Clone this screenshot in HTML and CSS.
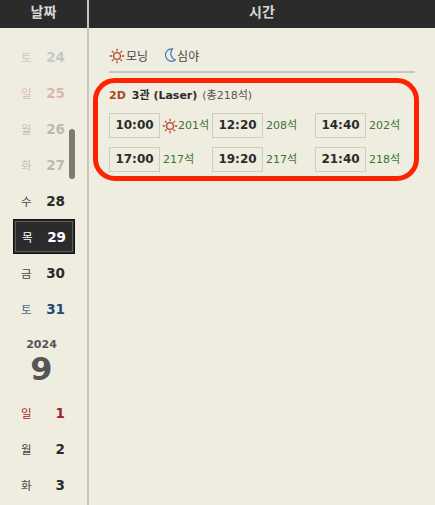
FILE: index.html
```html
<!DOCTYPE html>
<html lang="ko">
<head>
<meta charset="utf-8">
<title>시간표</title>
<link rel="stylesheet" href="styles.css">
</head>
<body>
<div class="app">
  <aside class="dates">
    <div class="head">날짜</div>
    <div class="list">
      <div class="day past sat"><span class="dow">토</span><b class="num">24</b></div>
      <div class="day past sun"><span class="dow">일</span><b class="num">25</b></div>
      <div class="day past"><span class="dow">월</span><b class="num">26</b></div>
      <div class="day past"><span class="dow">화</span><b class="num">27</b></div>
      <div class="day"><span class="dow">수</span><b class="num">28</b></div>
      <div class="day selected"><span class="dow">목</span><b class="num">29</b></div>
      <div class="day"><span class="dow">금</span><b class="num">30</b></div>
      <div class="day sat"><span class="dow">토</span><b class="num">31</b></div>
      <div class="month"><span class="year">2024</span><span class="mon">9</span></div>
      <div class="day sun"><span class="dow">일</span><b class="num">1</b></div>
      <div class="day"><span class="dow">월</span><b class="num">2</b></div>
      <div class="day"><span class="dow">화</span><b class="num">3</b></div>
    </div>
    <div class="scrollbar"></div>
  </aside>
  <main class="times">
    <div class="head">시간</div>
    <div class="legend">
      <span class="legend-item">
        <svg class="icon" viewBox="0 0 16 16"><use href="#sun"/></svg>모닝
      </span>
      <span class="legend-item">
        <svg class="icon-moon" viewBox="0 0 11 15"><path d="M7.500 .9A6.200 6.200 0 1 0 10.400 12 7 7 0 0 1 7.500 .9Z"/></svg>심야
      </span>
    </div>
    <section class="hall">
      <h2 class="hall-title"><b class="fmt">2D</b><b class="name">3관 (Laser)</b><span class="total">(총218석)</span></h2>
      <div class="grid">
        <div class="slot"><span class="time">10:00</span><span class="seats"><svg class="icon small" viewBox="0 0 16 16"><use href="#sun"/></svg>201석</span></div>
        <div class="slot"><span class="time">12:20</span><span class="seats">208석</span></div>
        <div class="slot"><span class="time">14:40</span><span class="seats">202석</span></div>
        <div class="slot"><span class="time">17:00</span><span class="seats">217석</span></div>
        <div class="slot"><span class="time">19:20</span><span class="seats">217석</span></div>
        <div class="slot"><span class="time">21:40</span><span class="seats">218석</span></div>
      </div>
    </section>
    <div class="highlight"></div>
  </main>
</div>
<svg class="defs" width="0" height="0">
  <symbol id="sun" viewBox="0 0 16 16">
    <g fill="none" stroke="#b8452c" stroke-width="1.3">
      <circle cx="8" cy="8" r="3.4"/>
      <path d="M8 .8v2.400M8 12.800v2.400M.8 8h2.400M12.800 8h2.400M2.900 2.900l1.700 1.700M11.400 11.400l1.700 1.700M2.900 13.100l1.700-1.700M11.400 4.600l1.700-1.700"/>
    </g>
  </symbol>
</svg>
</body>
</html>
```
FILE: styles.css
```css
* { box-sizing: border-box; }
html, body { margin: 0; height: 100%; }
body {
  background: #efede0;
  font-family: "DejaVu Sans", "Noto Sans CJK KR", sans-serif;
  color: #2b2b2b;
  overflow: hidden;
}
.app { display: flex; height: 505px; }
.dates {
  position: relative;
  width: 89px;
  flex: none;
  border-right: 2px solid #c9c7b9;
}
.head {
  height: 28px;
  background: #2b2b2b;
  color: #d8d8d8;
  font-size: 14px;
  font-weight: bold;
  line-height: 25px;
  text-align: center;
}
.list { padding-top: 11px; }
.day {
  display: flex;
  align-items: center;
  justify-content: space-between;
  height: 36px;
  margin: 0 12px 0 13px;
  padding: 0 10px 0 8px;
}
.dow { font-size: 11.5px; color: #444; }
.num { font-size: 13.5px; }
.past { opacity: .26; }
.sat .dow, .sat .num { color: #234a7a; }
.sat .dow { color: #4a6c92; }
.sun .dow, .sun .num { color: #a51e22; }
.past.sat .dow, .past.sat .num { color: #45607a; }
.day.selected {
  height: 35px;
  margin-bottom: 1px;
  background: #2b2b2b;
  border: 1px solid #111;
  outline: 1px solid #5a5a5a;
  outline-offset: -3px;
  padding-right: 8px;
  padding-left: 8px;
}
.selected .dow, .selected .num { color: #fff; }
.month {
  display: flex;
  flex-direction: column;
  align-items: center;
  height: 68px;
  padding: 11px 4px 0 0;
  color: #555;
  font-weight: bold;
}
.year { font-size: 11px; line-height: 13px; }
.mon { font-size: 32px; line-height: 37px; }
.scrollbar {
  position: absolute;
  left: 69px;
  top: 129px;
  width: 6px;
  height: 50px;
  border-radius: 3px;
  background: #7c7b71;
}
.times { position: relative; flex: 1; }
.legend {
  display: flex;
  gap: 17px;
  height: 45px;
  margin: 0 20px;
  padding-top: 19px;
  border-bottom: 2px solid #c9c7b9;
  font-size: 12px;
  color: #444;
}
.legend-item { display: flex; align-items: center; height: 17px; gap: 1px; }
.icon { width: 16px; height: 16px; flex: none; }
.icon-moon { width: 11px; height: 15px; flex: none; fill: none; stroke: #3f7cbc; stroke-width: 1.2; }
.defs { position: absolute; }
.hall { padding: 15px 0 0 20px; }
.hall-title {
  display: flex;
  align-items: center;
  margin: 0;
  font-size: 11px;
  font-weight: normal;
  line-height: 16px;
}
.fmt { color: #a5491f; margin-right: 6px; }
.name { margin-right: 5px; }
.total { color: #555; }
.grid {
  display: grid;
  grid-template-columns: repeat(3, 103px);
  row-gap: 9px;
  margin-top: 9px;
}
.slot { display: flex; align-items: center; gap: 3px; }
.time {
  width: 51px;
  height: 25px;
  flex: none;
  border: 1px solid #cfcdc0;
  font-size: 12px;
  font-weight: bold;
  line-height: 23px;
  text-align: center;
}
.seats {
  display: flex;
  align-items: center;
  color: #3c7433;
  font-size: 11px;
  line-height: 16px;
  white-space: nowrap;
}
.icon.small { width: 16px; height: 16px; margin-left: -1px; }
.highlight {
  position: absolute;
  left: 4px;
  top: 78px;
  width: 326px;
  height: 103px;
  border: 5px solid #ff2200;
  border-radius: 22px;
  pointer-events: none;
}
```
